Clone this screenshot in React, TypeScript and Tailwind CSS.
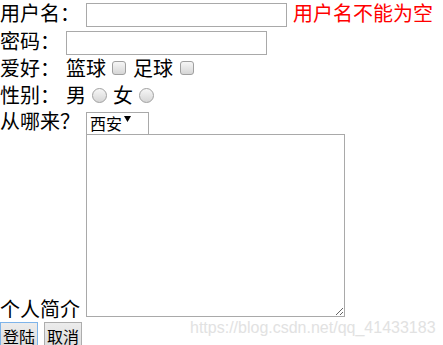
export default function App() {
  const box =
    "appearance-none shrink-0 border border-[#a0a0a0] bg-linear-to-b from-[#f6f6f6] to-[#d6d6d6]";

  return (
    <div className="relative w-[443px] h-[345px] overflow-hidden bg-white text-black text-[20px] leading-[26px] font-[family-name:'Noto_Sans_CJK_SC',sans-serif]">
      <form className="flex flex-col">
        {/* 用户名 */}
        <div className="flex items-start h-[28px]">
          <span>用户名：</span>
          <input type="text" className="ml-[6px] mt-[3px] w-[201px] h-[24px] border border-[#a9a9a9] bg-white outline-none" />
          <span className="ml-[6px] text-[#ff0000]">用户名不能为空</span>
        </div>

        {/* 密码 */}
        <div className="flex items-start h-[27px]">
          <span>密码：</span>
          <input type="password" className="ml-[6px] mt-[3px] w-[201px] h-[24px] border border-[#a9a9a9] bg-white outline-none" />
        </div>

        {/* 爱好 */}
        <div className="flex items-start h-[27px]">
          <span>爱好：</span>
          <span className="ml-[6px]">篮球</span>
          <input type="checkbox" className={`${box} ml-[6px] mt-[6px] w-[14px] h-[14px] rounded-[3px]`} />
          <span className="ml-[7px]">足球</span>
          <input type="checkbox" className={`${box} ml-[7px] mt-[6px] w-[14px] h-[14px] rounded-[3px]`} />
        </div>

        {/* 性别 */}
        <div className="flex items-start h-[26px]">
          <span>性别：</span>
          <span className="ml-[6px]">男</span>
          <input type="radio" name="sex" className={`${box} ml-[6px] mt-[6px] w-[15px] h-[15px] rounded-full`} />
          <span className="ml-[6px]">女</span>
          <input type="radio" name="sex" className={`${box} ml-[6px] mt-[6px] w-[15px] h-[15px] rounded-full`} />
        </div>

        {/* 从哪来 */}
        <div className="flex items-start h-[25px]">
          <span>从哪来？</span>
          <div className="relative ml-[6px] mt-[1px] w-[63px] h-[23px]">
            <select className="appearance-none w-full h-full border border-[#a9a9a9] bg-white pl-[3px] text-[16px] leading-[20px] outline-none">
              <option>西安</option>
              <option>北京</option>
              <option>上海</option>
            </select>
            <svg className="absolute left-[38px] top-[7px] pointer-events-none" width="7" height="6" viewBox="0 0 7 6">
              <path d="M0 0H7L3.5 6Z" fill="#000" />
            </svg>
          </div>
        </div>

        {/* 个人简介 */}
        <div className="flex items-end h-[189px]">
          <span>个人简介</span>
          <textarea className="ml-[6px] self-start mt-[1px] w-[259px] h-[183px] border border-[#a9a9a9] bg-white outline-none" />
        </div>

        {/* 按钮 */}
        <div className="flex items-start gap-[6px] h-[30px]">
          <button type="submit" className="w-[38px] h-[28px] border border-[#7eb4ea] bg-linear-to-b from-[#ececec] to-[#dcdcdc] text-[16px] leading-[22px]">
            登陆
          </button>
          <button type="reset" className="w-[38px] h-[28px] border border-[#adadad] bg-linear-to-b from-[#ececec] to-[#dcdcdc] text-[16px] leading-[22px]">
            取消
          </button>
        </div>
      </form>

      <span className="absolute left-[190px] top-[318px] text-[16px] leading-[20px] text-[#e2e2e2] font-[family-name:'Liberation_Sans',sans-serif]">
        https://blog.csdn.net/qq_41433183
      </span>
    </div>
  );
}
